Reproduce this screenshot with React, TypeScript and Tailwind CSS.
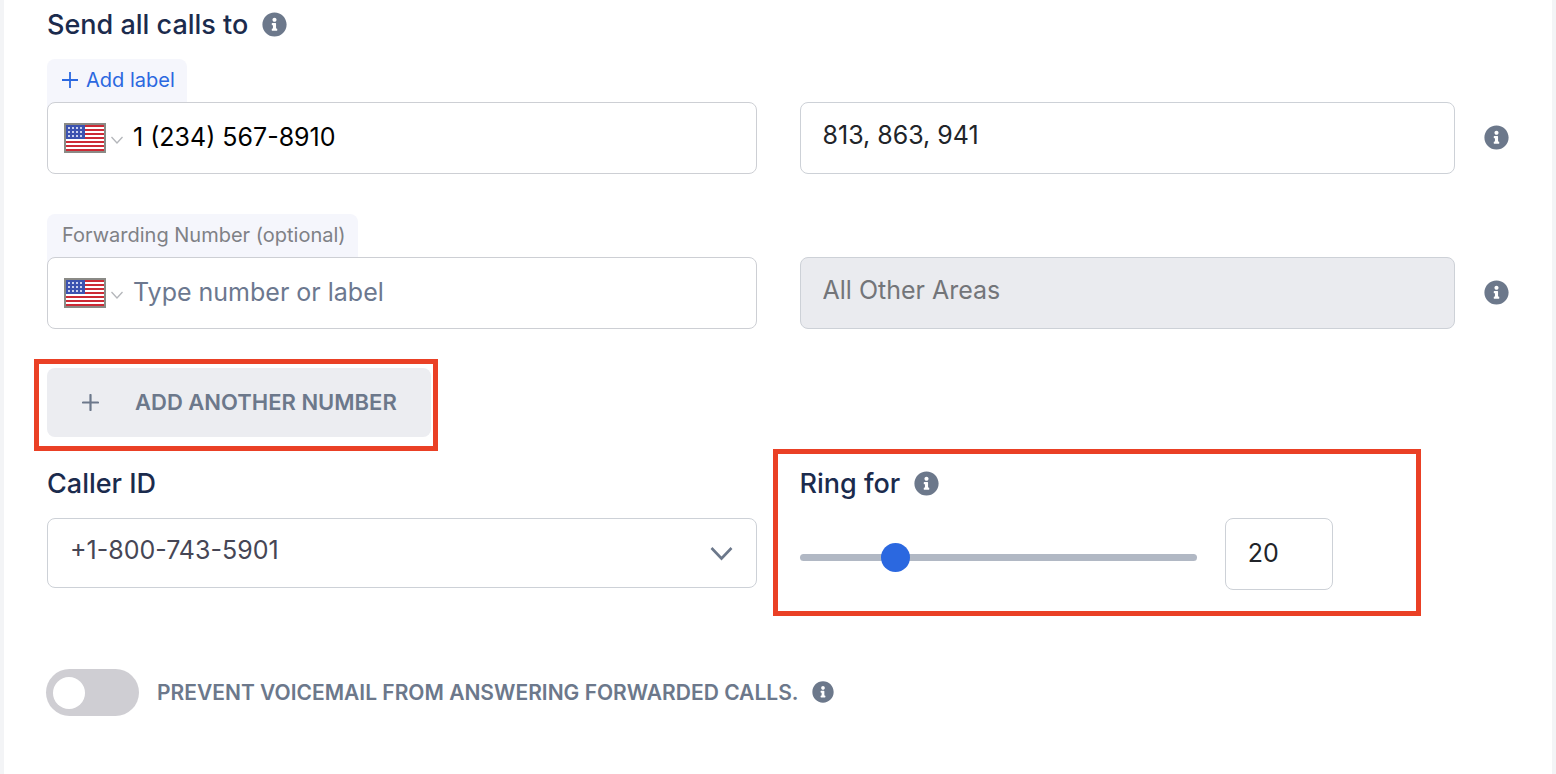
import React, { useState } from 'react';
import { FaInfoCircle } from 'react-icons/fa';

const InfoButton = ({ label, size = 25 }: { label: string; size?: number }) => (
    <button type="button" aria-label={label} className="shrink-0 pb-0.5 text-[#6c788b]">
        <FaInfoCircle size={size} />
    </button>
);

const UsFlag = () => (
    <svg width="42" height="30" viewBox="0 0 42 30" aria-hidden="true">
        <rect width="42" height="30" fill="#8a8a86" />
        <rect x="2" y="2" width="38" height="26" fill="#fff" />
        {[0, 1, 2, 3, 4, 5, 6].map((i) => (
            <rect key={i} x="2" y={2 + i * 4} width="38" height="2" fill="#cc2a35" />
        ))}
        <rect x="2" y="2" width="19" height="14" fill="#3c52b0" />
        {[4, 8, 12].map((y) =>
            [4, 8, 12, 16].map((x) => (
                <rect key={`${x}-${y}`} x={x} y={y} width="2" height="2" fill="#c9d0ee" />
            ))
        )}
    </svg>
);

interface PhoneFieldProps {
    id: string;
    label: string;
    value: string;
    placeholder?: string;
    onChange: (value: string) => void;
}

const PhoneField: React.FC<PhoneFieldProps> = ({ id, label, value, placeholder, onChange }) => (
    <div className="relative flex h-[72px] items-center rounded-lg border border-[#cdcfd4] bg-white pl-4">
        <button type="button" aria-label="Select country" className="flex shrink-0 items-center gap-1">
            <UsFlag />
            <svg width="14" height="12" viewBox="0 0 14 12" fill="none" stroke="#b4b6ba" strokeWidth="1.3" aria-hidden="true">
                <path d="M1.5 5l5.5 6 5.5-6" />
            </svg>
        </button>
        <input
            id={id}
            type="tel"
            aria-label={label}
            value={value}
            placeholder={placeholder}
            onChange={(e) => onChange(e.target.value)}
            className="h-full min-w-0 flex-1 bg-transparent px-[9px] pb-0.5 text-[25px] text-black outline-none placeholder:text-[#6c788f]"
        />
    </div>
);

export default function App() {
    const [number, setNumber] = useState('1 (234) 567-8910');
    const [forwardTo, setForwardTo] = useState('');
    const [areas, setAreas] = useState('813, 863, 941');
    const [ringFor, setRingFor] = useState(20);
    const [preventVoicemail, setPreventVoicemail] = useState(false);

    return (
        <main className="min-h-screen border-x-4 border-[#f3f4f6] bg-white px-[43px] pt-[7px] font-['Inter',sans-serif]">
            <div className="flex h-9 items-center gap-[14px]">
                <h2 className="text-[27px] font-medium text-[#1b2b4d]">Send all calls to</h2>
                <InfoButton label="About call routing" />
            </div>

            <div className="mt-4 grid grid-cols-2 items-end gap-x-[43px] gap-y-10">
                <div>
                    <button
                        type="button"
                        className="-mb-2 flex h-[51px] items-center gap-2 rounded-t-lg bg-[#f5f6fc] pr-3 pb-2.5 pl-[15px] text-[20px] text-[#2b68e0]"
                    >
                        <svg width="16" height="16" viewBox="0 0 16 16" stroke="currentColor" strokeWidth="1.8" aria-hidden="true">
                            <path d="M0 8h16M8 0v16" />
                        </svg>
                        Add label
                    </button>
                    <PhoneField id="number" label="Phone number" value={number} onChange={setNumber} />
                </div>
                <div className="flex items-center gap-[29px]">
                    <input
                        type="text"
                        aria-label="Area codes"
                        value={areas}
                        onChange={(e) => setAreas(e.target.value)}
                        className="h-[72px] min-w-0 flex-1 rounded-lg border border-[#cdd1d7] px-[22px] pb-1.5 text-[25px] text-[#212429] outline-none"
                    />
                    <InfoButton label="About area codes" />
                </div>

                <div>
                    <label
                        htmlFor="forwarding"
                        className="-mb-2 flex h-[51px] w-fit items-center rounded-t-lg bg-[#f5f6fc] pr-3 pb-2.5 pl-[15px] text-[20px] text-[#7f8186]"
                    >
                        Forwarding Number (optional)
                    </label>
                    <PhoneField
                        id="forwarding"
                        label="Forwarding Number (optional)"
                        value={forwardTo}
                        placeholder="Type number or label"
                        onChange={setForwardTo}
                    />
                </div>
                <div className="flex items-center gap-[29px]">
                    <input
                        type="text"
                        disabled
                        aria-label="Areas"
                        value="All Other Areas"
                        className="h-[72px] min-w-0 flex-1 rounded-lg border border-[#cdd1d7] bg-[#eaebef] px-[22px] pb-1.5 text-[25px] text-[#737579]"
                    />
                    <InfoButton label="About other areas" />
                </div>
            </div>

            <div className="relative mt-[39px] w-fit">
                <button
                    type="button"
                    className="flex h-[69px] items-center gap-9 rounded-lg bg-[#ecedf1] pr-[34px] pl-[35px] text-[22px] font-semibold text-[#6c788b]"
                >
                    <svg width="17" height="17" viewBox="0 0 17 17" stroke="currentColor" strokeWidth="2.2" strokeLinecap="round" aria-hidden="true">
                        <path d="M1 8.5h15M8.5 1v15" />
                    </svg>
                    ADD ANOTHER NUMBER
                </button>
                <div className="pointer-events-none absolute -top-[9px] -right-[7px] -bottom-[14px] -left-[13px] border-5 border-[#ea4025]" />
            </div>

            <div className="mt-[29px] grid grid-cols-2 gap-x-[43px]">
                <div>
                    <label htmlFor="caller-id" className="flex h-9 items-center text-[27px] font-medium text-[#1b2b4d]">
                        Caller ID
                    </label>
                    <div className="relative mt-4">
                        <select
                            id="caller-id"
                            className="h-[70px] w-full appearance-none rounded-lg border border-[#cdd1d7] bg-white px-[22px] pb-1 text-[25px] text-[#464655] outline-none"
                        >
                            <option>+1-800-743-5901</option>
                        </select>
                        <svg
                            className="pointer-events-none absolute top-[28px] right-6"
                            width="23"
                            height="15"
                            viewBox="0 0 23 15"
                            fill="none"
                            stroke="#6c788b"
                            strokeWidth="2.6"
                            aria-hidden="true"
                        >
                            <path d="M1.5 2l10 10.5 10-10.5" />
                        </svg>
                    </div>
                </div>

                <div className="relative">
                    <div className="flex h-9 items-center gap-[14px]">
                        <label htmlFor="ring-for" className="text-[27px] font-medium text-[#1b2b4d]">
                            Ring for
                        </label>
                        <InfoButton label="About ring time" />
                    </div>
                    <div className="mt-4 flex items-center gap-7">
                        <input
                            id="ring-for"
                            type="range"
                            min={0}
                            max={90}
                            value={ringFor}
                            onChange={(e) => setRingFor(Number(e.target.value))}
                            className="mt-[7px] h-[7px] w-[56%] appearance-none rounded-full bg-[#b1b8c4] [&::-webkit-slider-thumb]:size-[29px] [&::-webkit-slider-thumb]:appearance-none [&::-webkit-slider-thumb]:rounded-full [&::-webkit-slider-thumb]:bg-[#2b68e0]"
                        />
                        <input
                            type="text"
                            aria-label="Ring seconds"
                            value={ringFor}
                            onChange={(e) => setRingFor(Number(e.target.value) || 0)}
                            className="h-[72px] w-[108px] rounded-lg border border-[#cdd1d7] px-[22px] pb-0.5 text-[25px] text-[#212429] outline-none"
                        />
                    </div>
                    <div className="pointer-events-none absolute -top-[17px] right-[88px] -bottom-[26px] -left-[27px] border-5 border-[#ea4025]" />
                </div>
            </div>

            <div className="mt-[79px] -ml-px flex items-center gap-[18px] pb-14">
                <input
                    id="prevent-voicemail"
                    type="checkbox"
                    role="switch"
                    checked={preventVoicemail}
                    onChange={(e) => setPreventVoicemail(e.target.checked)}
                    className="flex h-[47px] w-[93px] shrink-0 appearance-none items-center rounded-full bg-[#cfced3] px-[7px] before:size-8 before:rounded-full before:bg-white checked:justify-end checked:bg-[#2b68e0]"
                />
                <div className="flex items-center gap-[14px]">
                    <label htmlFor="prevent-voicemail" className="text-[21px] font-semibold text-[#6c788b]">
                        PREVENT VOICEMAIL FROM ANSWERING FORWARDED CALLS.
                    </label>
                    <InfoButton label="About voicemail" size={22} />
                </div>
            </div>
        </main>
    );
}
